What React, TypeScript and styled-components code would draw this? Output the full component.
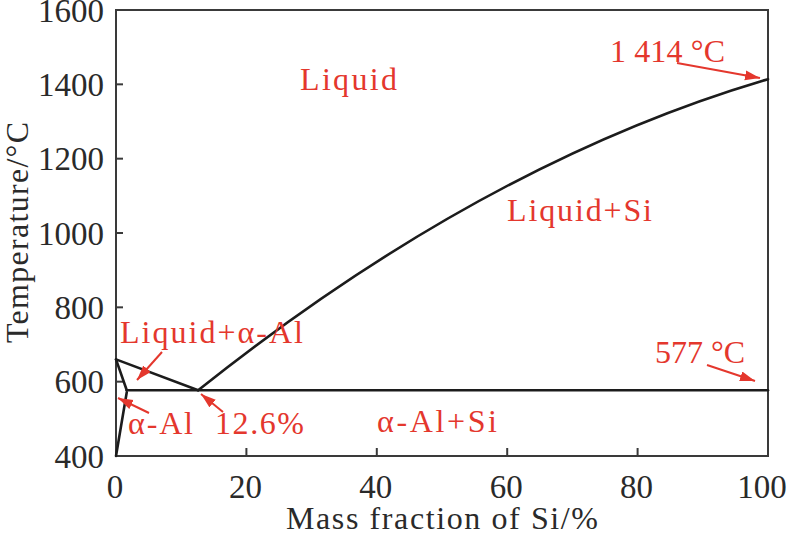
import React from 'react'
import styled, { createGlobalStyle } from 'styled-components'

const GlobalStyle = createGlobalStyle`
    html, body {
        margin: 0;
        padding: 0;
        background: #ffffff;
    }
`

const Figure = styled.div`
    width: 793px;
    height: 536px;
    background: #ffffff;
    overflow: hidden;
`

const Chart = styled.svg`
    display: block;
    width: 793px;
    height: 536px;
    font-family: "Liberation Serif", "Times New Roman", serif;
`

const Frame = styled.rect`
    fill: none;
    stroke: #3a3a3a;
    stroke-width: 2;
`

const Tick = styled.line`
    stroke: #3a3a3a;
    stroke-width: 2;
`

const TickLabel = styled.text<{ $anchor?: string }>`
    font-size: 33px;
    fill: #2a2a2a;
    text-anchor: ${p => p.$anchor || 'middle'};
`

const AxisTitle = styled.text`
    font-size: 32px;
    fill: #2a2a2a;
`

const Curve = styled.path`
    fill: none;
    stroke: #1c1c1c;
    stroke-width: 2.6;
    stroke-linecap: round;
    stroke-linejoin: round;
`

const RegionLabel = styled.text`
    font-size: 32px;
    fill: #e4372d;
`

const Arrow = styled.line`
    stroke: #e4372d;
    stroke-width: 2;
`

// plot box, in page pixels
const X0 = 116
const X1 = 768
const Y0 = 10
const Y1 = 456

const px = (si: number) => X0 + (si / 100) * (X1 - X0)
const py = (t: number) => Y1 - ((t - 400) / 1200) * (Y1 - Y0)

const tempTicks = [400, 600, 800, 1000, 1200, 1400, 1600]
const massTicks = [0, 20, 40, 60, 80, 100]

const arrows = [
    { x1: 677, y1: 63, x2: 760, y2: 78 },
    { x1: 707, y1: 365, x2: 755, y2: 381 },
    { x1: 162, y1: 352, x2: 137, y2: 380 },
    { x1: 149, y1: 413, x2: 118, y2: 398 },
    { x1: 223, y1: 412, x2: 201, y2: 394 },
]

const labels = [
    { text: 'Liquid', x: 300, y: 90, w: 97 },
    { text: 'Liquid+Si', x: 507, y: 221, w: 145 },
    { text: '1 414 °C', x: 610, y: 62, w: 115 },
    { text: '577 °C', x: 655, y: 363, w: 90 },
    { text: 'Liquid+α-Al', x: 120, y: 343, w: 183 },
    { text: 'α-Al', x: 128, y: 434, w: 65 },
    { text: '12.6%', x: 215, y: 434, w: 89 },
    { text: 'α-Al+Si', x: 377, y: 432, w: 120 },
]

const PhaseDiagram: React.FC = () => {
    const eutX = px(12.6)
    const eutY = py(577)
    const alMelt = py(660)
    const solidusX = px(1.65)

    // Si liquidus: quadratic through (12.6%, 577) and (100%, 1414)
    const liquidusSi = `M${eutX} ${eutY} Q483 162.9 ${X1} ${py(1414)}`

    return (
        <Chart viewBox="0 0 793 536">
            <defs>
                <marker id="head" markerUnits="userSpaceOnUse" markerWidth="16" markerHeight="12"
                    refX="15" refY="5" orient="auto">
                    <path d="M0 0 L15 5 L0 10 z" fill="#e4372d" />
                </marker>
            </defs>

            <Frame x={X0} y={Y0} width={X1 - X0} height={Y1 - Y0} />

            {tempTicks.map(t => (
                <g key={t}>
                    {t > 400 && t < 1600 && <Tick x1={X0} y1={py(t)} x2={X0 + 7} y2={py(t)} />}
                    <TickLabel $anchor="end" x={104} y={py(t) + 11.5}>{t}</TickLabel>
                </g>
            ))}

            {massTicks.map(m => (
                <g key={m}>
                    {m > 0 && m < 100 && <Tick x1={px(m)} y1={Y1} x2={px(m)} y2={Y1 - 8} />}
                    <TickLabel x={m === 100 ? 762 : px(m) - 1} y={498}>{m}</TickLabel>
                </g>
            ))}

            <AxisTitle x={286} y={529} textLength={312} lengthAdjust="spacing">Mass fraction of Si/%</AxisTitle>
            <AxisTitle transform="translate(28 343) rotate(-90)" textLength={221} lengthAdjust="spacing">
                Temperature/°C
            </AxisTitle>

            <Curve d={`M${X0} ${alMelt} L${eutX} ${eutY}`} />
            <Curve d={`M${X0} ${alMelt} L${solidusX} ${eutY}`} />
            <Curve d={`M${solidusX} ${eutY} L${X1} ${eutY}`} />
            <Curve d={`M${solidusX} ${eutY + 2} Q${X0 + 6} ${eutY + 30} ${X0} ${Y1}`} />
            <Curve d={liquidusSi} />

            {labels.map(l => (
                <RegionLabel key={l.text} x={l.x} y={l.y} textLength={l.w} lengthAdjust="spacing">
                    {l.text}
                </RegionLabel>
            ))}

            {arrows.map((a, i) => (
                <Arrow key={i} {...a} markerEnd="url(#head)" />
            ))}
        </Chart>
    )
}

export default function App() {
    return (
        <>
            <GlobalStyle />
            <Figure>
                <PhaseDiagram />
            </Figure>
        </>
    )
}
